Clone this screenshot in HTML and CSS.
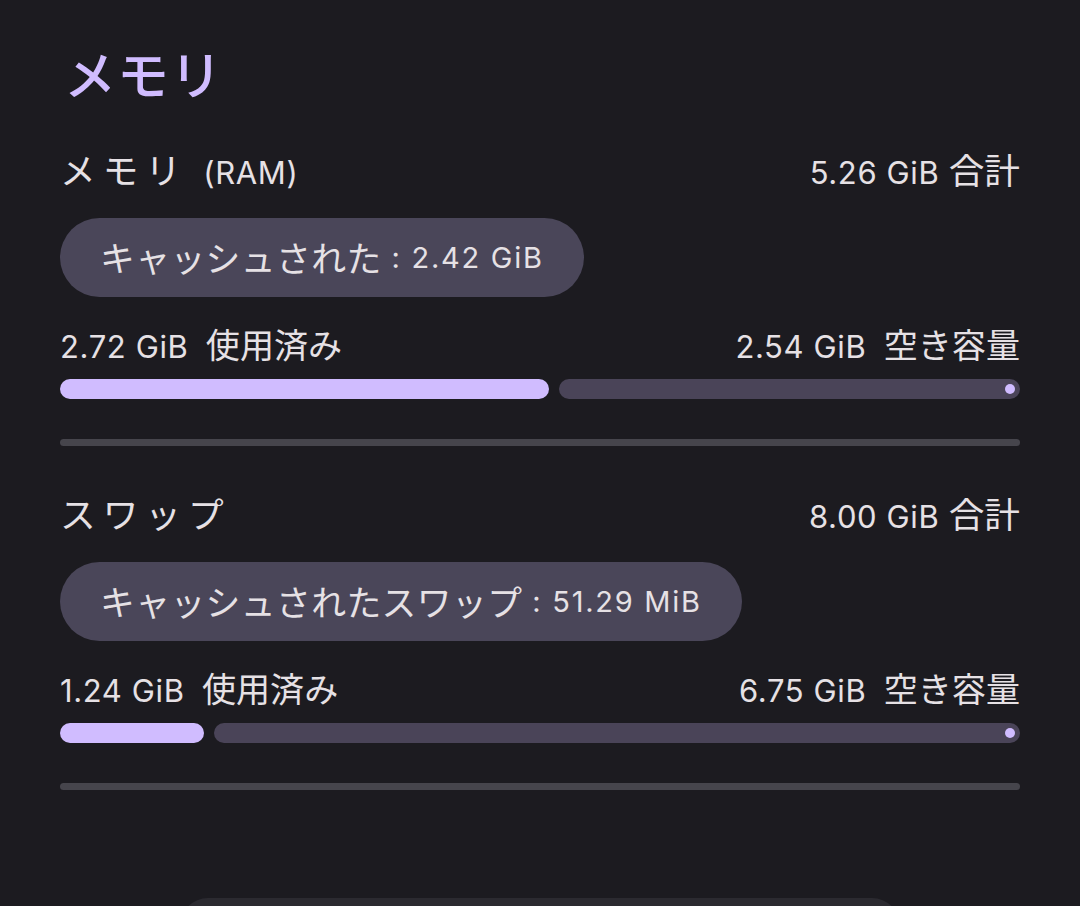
FILE: index.html
```html
<!DOCTYPE html>
<html lang="ja">
  <head>
    <meta charset="utf-8" />
    <title>メモリ</title>
    <link rel="stylesheet" href="styles.css">
  </head>
  <body>
    <div class="page">
      <h1 class="title">メモリ</h1>

      <div class="section">
        <div class="row head">
          <span><span class="ja wide">メモリ</span> (RAM)</span>
          <span>5.26 GiB <span class="ja">合計</span></span>
        </div>
        <div class="chip"><span class="ja">キャッシュされた</span> : 2.42 GiB</div>
        <div class="row usage">
          <span>2.72 GiB <span class="ja">使用済み</span></span>
          <span>2.54 GiB <span class="ja">空き容量</span></span>
        </div>
        <div class="bar">
          <div class="used" style="width:50.9%"></div>
          <div class="rest"><span class="dot"></span></div>
        </div>
        <div class="divider"></div>
      </div>

      <div class="section">
        <div class="row head">
          <span><span class="ja wide">スワップ</span></span>
          <span>8.00 GiB <span class="ja">合計</span></span>
        </div>
        <div class="chip"><span class="ja">キャッシュされたスワップ</span> : 51.29 MiB</div>
        <div class="row usage">
          <span>1.24 GiB <span class="ja">使用済み</span></span>
          <span>6.75 GiB <span class="ja">空き容量</span></span>
        </div>
        <div class="bar">
          <div class="used" style="width:15%"></div>
          <div class="rest"><span class="dot"></span></div>
        </div>
        <div class="divider"></div>
      </div>

      <div class="bottom"></div>
    </div>
  </body>
</html>
```

FILE: styles.css
```css
html {
  background-color: #1c1b20;
}

body {
  margin: 0;
  height: 906px;
  overflow: hidden;
  font-family: "Inter", "Noto Sans CJK JP", sans-serif;
  color: #e6e1e5;
}

.page {
  padding: 0 60px;
}

.title {
  margin: 0;
  padding-top: 38px;
  padding-left: 4px;
  height: 70px;
  font-family: "Noto Sans CJK JP", sans-serif;
  font-size: 52px;
  font-weight: 500;
  line-height: 70px;
  letter-spacing: 1px;
  color: #d0bcff;
}

.ja {
  font-family: "Noto Sans CJK JP", sans-serif;
  font-size: 1.15em;
  line-height: 1;
  letter-spacing: 0;
}

.section {
  display: flex;
  flex-direction: column;
}

.row {
  display: flex;
  justify-content: space-between;
  align-items: center;
  letter-spacing: 0.02em;
}

.head {
  margin-top: 40px;
  height: 46px;
  font-size: 31px;
}

.head .wide {
  letter-spacing: 7px;
  margin-right: 6px;
}

.section + .section .head {
  margin-top: 46px;
}

.chip {
  align-self: flex-start;
  margin-top: 24px;
  height: 79px;
  padding: 0 40px;
  box-sizing: border-box;
  display: flex;
  align-items: center;
  border-radius: 40px;
  background-color: #4a4659;
  font-size: 29px;
  letter-spacing: 0.06em;
  white-space: pre;
}

.chip .ja {
  font-size: 1.2em;
  letter-spacing: 0.4px;
}

.usage {
  margin-top: 28px;
  height: 40px;
  font-size: 31px;
}

.usage .ja {
  margin-left: 8px;
  font-size: 1.1em;
}

.bar {
  display: flex;
  gap: 10px;
  margin-top: 14px;
  height: 20px;
}

.used {
  background-color: #d0bcff;
  border-radius: 10px;
}

.rest {
  flex: 1;
  display: flex;
  justify-content: flex-end;
  align-items: center;
  padding-right: 5px;
  background-color: #4a4458;
  border-radius: 10px;
}

.dot {
  width: 10px;
  height: 10px;
  border-radius: 50%;
  background-color: #d0bcff;
}

.divider {
  margin-top: 40px;
  height: 7px;
  border-radius: 4px;
  background-color: #46454c;
}

.bottom {
  margin: 108px 120px 0 120px;
  height: 40px;
  border-radius: 28px 28px 0 0;
  background-color: #2b2a30;
}
```
